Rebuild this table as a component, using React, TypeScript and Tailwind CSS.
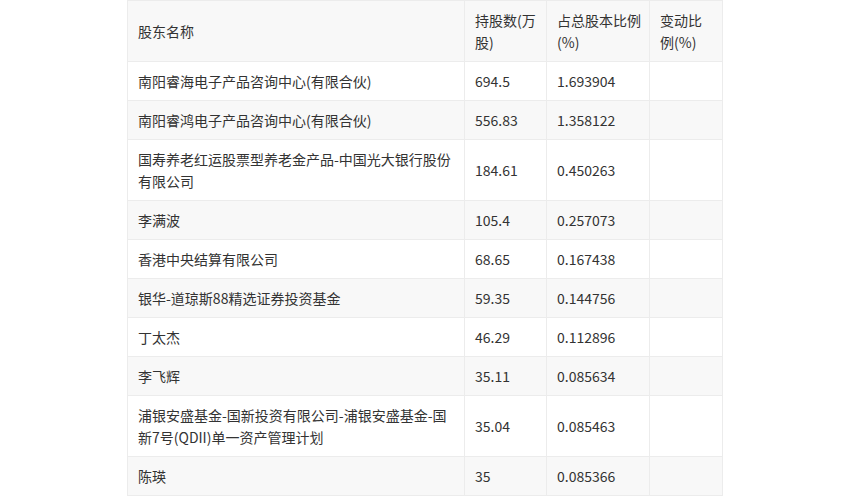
const rows: [string[], string, string][] = [
  [["南阳睿海电子产品咨询中心(有限合伙)"], "694.5", "1.693904"],
  [["南阳睿鸿电子产品咨询中心(有限合伙)"], "556.83", "1.358122"],
  [["国寿养老红运股票型养老金产品-中国光大银行股份", "有限公司"], "184.61", "0.450263"],
  [["李满波"], "105.4", "0.257073"],
  [["香港中央结算有限公司"], "68.65", "0.167438"],
  [["银华-道琼斯88精选证券投资基金"], "59.35", "0.144756"],
  [["丁太杰"], "46.29", "0.112896"],
  [["李飞辉"], "35.11", "0.085634"],
  [["浦银安盛基金-国新投资有限公司-浦银安盛基金-国", "新7号(QDII)单一资产管理计划"], "35.04", "0.085463"],
  [["陈瑛"], "35", "0.085366"],
];

function Lines({ lines }: { lines: string[] }) {
  return (
    <>
      {lines.map((l, i) => (
        <span key={i} className="block whitespace-nowrap">
          {l}
        </span>
      ))}
    </>
  );
}

export default function App() {
  const cell = "border border-[#ececec] px-[10px] py-[8px] align-middle";
  return (
    <div className="w-full h-[496px] bg-white overflow-hidden">
      <table
        className="mx-auto w-[595px] table-fixed border-collapse text-[14px] leading-[22px] text-[#333]"
        style={{ fontFamily: '"Microsoft YaHei", "Noto Sans CJK SC", "Noto Sans", sans-serif' }}
      >
        <colgroup>
          <col className="w-[337px]" />
          <col className="w-[82px]" />
          <col className="w-[103px]" />
          <col className="w-[73px]" />
        </colgroup>
        <thead>
          <tr className="bg-[#f8f8f8] h-[61px]">
            <td className={cell}>股东名称</td>
            <td className={cell}>
              <Lines lines={["持股数(万", "股)"]} />
            </td>
            <td className={cell}>
              <Lines lines={["占总股本比例", "(%)"]} />
            </td>
            <td className={cell}>
              <Lines lines={["变动比", "例(%)"]} />
            </td>
          </tr>
        </thead>
        <tbody>
          {rows.map(([name, shares, pct], i) => (
            <tr key={i} className={i % 2 === 1 ? "bg-[#f8f8f8]" : "bg-white"}>
              <td className={cell}>
                <Lines lines={name} />
              </td>
              <td className={cell}>{shares}</td>
              <td className={cell}>{pct}</td>
              <td className={cell}></td>
            </tr>
          ))}
        </tbody>
      </table>
    </div>
  );
}
